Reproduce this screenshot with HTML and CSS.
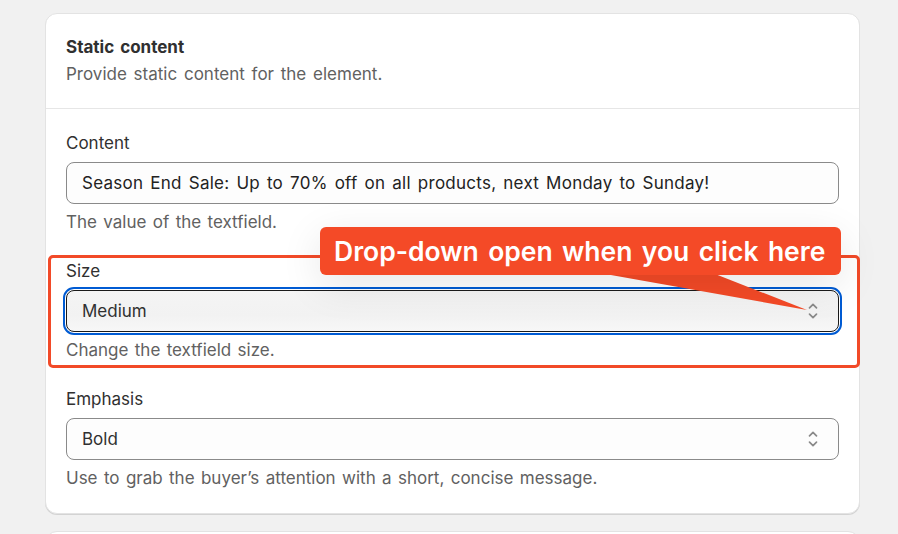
FILE: index.html
```html
<!DOCTYPE html>
<html lang="en">
<head>
<meta charset="utf-8">
<title>Static content</title>
<link rel="stylesheet" href="styles.css">
</head>
<body>
<div class="page">
  <section class="card">
    <header class="card-header">
      <h2 class="card-title">Static content</h2>
      <p class="card-subtitle">Provide static content for the element.</p>
    </header>
    <div class="card-body">
      <div class="field">
        <label class="field-label">Content</label>
        <div class="input input-text">Season End Sale: Up to 70% off on all products, next Monday to Sunday!</div>
        <p class="field-help">The value of the textfield.</p>
      </div>
      <div class="field">
        <label class="field-label">Size</label>
        <div class="input select is-focused">
          <span>Medium</span>
          <svg class="chevrons" viewBox="0 0 20 20" width="20" height="20"><path d="M6.5 6.8 L10 3.3 L13.5 6.8 M6.5 13.2 L10 16.7 L13.5 13.2"/></svg>
        </div>
        <p class="field-help">Change the textfield size.</p>
      </div>
      <div class="field">
        <label class="field-label">Emphasis</label>
        <div class="input select">
          <span>Bold</span>
          <svg class="chevrons" viewBox="0 0 20 20" width="20" height="20"><path d="M6.5 6.8 L10 3.3 L13.5 6.8 M6.5 13.2 L10 16.7 L13.5 13.2"/></svg>
        </div>
        <p class="field-help">Use to grab the buyer’s attention with a short, concise message.</p>
      </div>
    </div>
  </section>
  <section class="card card-next"></section>

  <div class="annot-box"></div>
  <svg class="annot-tail" width="898" height="534" viewBox="0 0 898 534"><polygon points="594,272 710,272 807,310"/></svg>
  <div class="annot-callout">Drop-down open when you click here</div>
</div>
</body>
</html>
```
FILE: styles.css
```css
* { box-sizing: border-box; }
html, body {
  margin: 0;
  padding: 0;
  background: #f1f1f1;
  font-family: Inter, "Noto Sans", "Liberation Sans", sans-serif;
  color: #303030;
  overflow: hidden;
}
.page {
  position: relative;
  width: 898px;
  height: 534px;
  padding: 13px 38px 0 45px;
  overflow: hidden;
}
.card {
  background: #fff;
  border: 1px solid #e3e3e3;
  border-radius: 12px;
  box-shadow: 0 1px 0 rgba(0,0,0,0.12);
}
.card-next {
  margin-top: 17px;
  height: 40px;
}
.card-header {
  padding: 23px 20px 24px;
  border-bottom: 1px solid #e6e6e6;
}
.card-title {
  margin: 0;
  font-size: 17px;
  line-height: 20px;
  font-weight: 700;
  word-spacing: 2px;
  color: #303030;
}
.card-subtitle {
  margin: 7px 0 0;
  font-size: 17px;
  line-height: 20px;
  word-spacing: 2px;
  color: #616161;
}
.card-body {
  padding: 24px 20px 25px;
  display: flex;
  flex-direction: column;
  gap: 29px;
}
.field {
  display: flex;
  flex-direction: column;
}
.field-label {
  font-size: 17px;
  line-height: 20px;
  color: #303030;
}
.input {
  margin-top: 9px;
  height: 42px;
  border: 1px solid #8a8a8a;
  border-radius: 8px;
  background: #fdfdfd;
  padding: 0 15px;
  display: flex;
  align-items: center;
  font-size: 17px;
  color: #303030;
}
.input-text {
  letter-spacing: 0.25px;
  word-spacing: 2px;
  color: #222;
}
.select {
  justify-content: space-between;
  padding-right: 15px;
}
.select.is-focused {
  border-color: #1a1a1a;
  outline: 2px solid #005bd3;
  outline-offset: 1px;
  background: linear-gradient(180deg, #f4f4f4, #f2f2f2 60%, #f7f7f7);
}
.chevrons {
  fill: none;
  stroke: #8a8a8a;
  stroke-width: 1.7;
  stroke-linecap: round;
  stroke-linejoin: round;
}
.field-help {
  margin: 8px 0 0;
  font-size: 17px;
  line-height: 20px;
  word-spacing: 1.6px;
  color: #616161;
}
.annot-box {
  position: absolute;
  left: 48px;
  top: 255px;
  width: 812px;
  height: 113px;
  border: 3px solid #f24a28;
  border-radius: 5px;
}
.annot-tail {
  position: absolute;
  left: 0;
  top: 0;
  fill: #f44a27;
}
.annot-callout {
  position: absolute;
  left: 320px;
  top: 227px;
  width: 521px;
  height: 48px;
  border-radius: 6px;
  background: #f44a27;
  color: #fff;
  font-size: 26.5px;
  font-weight: 600;
  line-height: 48px;
  word-spacing: 2.7px;
  padding-left: 14px;
  white-space: nowrap;
  box-shadow: 0 10px 40px rgba(0,0,0,0.10);
}
```
